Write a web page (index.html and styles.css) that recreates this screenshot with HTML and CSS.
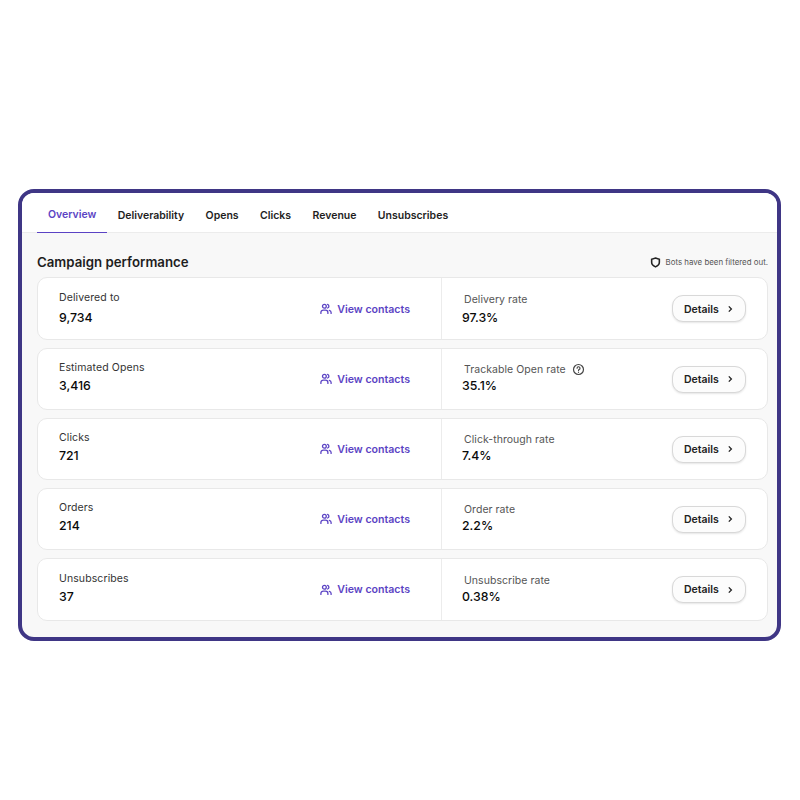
FILE: index.html
```html
<!DOCTYPE html>
<html lang="en">
<head>
<meta charset="utf-8">
<title>Campaign performance</title>
<link rel="stylesheet" href="styles.css">
</head>
<body>
<svg class="sprite" width="0" height="0" aria-hidden="true">
  <symbol id="people" viewBox="0 0 12 12">
    <circle cx="4.4" cy="3.2" r="1.9"/>
    <path d="M0.9 10.4V9.5a2.4 2.4 0 0 1 2.4-2.4h2.2a2.4 2.4 0 0 1 2.4 2.4v.9"/>
    <path d="M7.6 1.4a1.9 1.9 0 0 1 0 3.6"/>
    <path d="M9.3 7.3a2.3 2.3 0 0 1 1.8 2.2v.9"/>
  </symbol>
  <symbol id="chevron" viewBox="0 0 8 8">
    <path d="M2.800 1.400 5.400 4 2.800 6.600"/>
  </symbol>
</svg>
<main class="frame">
  <nav class="tabs">
    <a class="tab active">Overview</a>
    <a class="tab">Deliverability</a>
    <a class="tab">Opens</a>
    <a class="tab">Clicks</a>
    <a class="tab">Revenue</a>
    <a class="tab">Unsubscribes</a>
  </nav>
  <section class="content">
    <header class="head">
      <h1>Campaign performance</h1>
      <p class="note">
        <svg class="shield" viewBox="0 0 12 12"><path d="M6 1.200 10.200 2.600v3.200c0 2.400-1.800 4-4.200 5-2.400-1-4.200-2.600-4.200-5V2.600z"/></svg>
        Bots have been filtered out.
      </p>
    </header>
    <div class="rows">
      <article class="row first">
        <div class="cell left">
          <div class="stat"><span class="label">Delivered to</span><span class="value">9,734</span></div>
          <a class="link"><svg class="icon"><use href="#people"/></svg>View contacts</a>
        </div>
        <div class="cell right">
          <div class="stat rate"><span class="label muted">Delivery rate</span><span class="value">97.3%</span></div>
          <button class="btn">Details<svg class="chev"><use href="#chevron"/></svg></button>
        </div>
      </article>
      <article class="row">
        <div class="cell left">
          <div class="stat"><span class="label">Estimated Opens</span><span class="value">3,416</span></div>
          <a class="link"><svg class="icon"><use href="#people"/></svg>View contacts</a>
        </div>
        <div class="cell right">
          <div class="stat rate"><span class="label muted">Trackable Open rate
            <svg class="help" viewBox="0 0 12 12"><circle cx="6" cy="6" r="4.600"/><path d="M4.700 4.800a1.350 1.350 0 1 1 1.900 1.250c-.4.200-.6.450-.6.850"/><path d="M6 8.500v.1"/></svg></span><span class="value">35.1%</span></div>
          <button class="btn">Details<svg class="chev"><use href="#chevron"/></svg></button>
        </div>
      </article>
      <article class="row">
        <div class="cell left">
          <div class="stat"><span class="label">Clicks</span><span class="value">721</span></div>
          <a class="link"><svg class="icon"><use href="#people"/></svg>View contacts</a>
        </div>
        <div class="cell right">
          <div class="stat rate"><span class="label muted">Click-through rate</span><span class="value">7.4%</span></div>
          <button class="btn">Details<svg class="chev"><use href="#chevron"/></svg></button>
        </div>
      </article>
      <article class="row">
        <div class="cell left">
          <div class="stat"><span class="label">Orders</span><span class="value">214</span></div>
          <a class="link"><svg class="icon"><use href="#people"/></svg>View contacts</a>
        </div>
        <div class="cell right">
          <div class="stat rate"><span class="label muted">Order rate</span><span class="value">2.2%</span></div>
          <button class="btn">Details<svg class="chev"><use href="#chevron"/></svg></button>
        </div>
      </article>
      <article class="row last">
        <div class="cell left">
          <div class="stat"><span class="label">Unsubscribes</span><span class="value">37</span></div>
          <a class="link"><svg class="icon"><use href="#people"/></svg>View contacts</a>
        </div>
        <div class="cell right">
          <div class="stat rate"><span class="label muted">Unsubscribe rate</span><span class="value">0.38%</span></div>
          <button class="btn">Details<svg class="chev"><use href="#chevron"/></svg></button>
        </div>
      </article>
    </div>
  </section>
</main>
</body>
</html>
```
FILE: styles.css
```css
* { box-sizing: border-box; }
html, body { margin: 0; height: 800px; background: #fff; }
body {
  padding: 189px 19px 0 18px;
  font-family: Inter, "Liberation Sans", sans-serif;
  color: #1e1e1e;
}
.sprite { position: absolute; }
.frame {
  height: 452px;
  border: 4px solid #3f3685;
  border-radius: 16px;
  overflow: hidden;
  background: #f8f8f8;
}
.tabs {
  display: flex;
  height: 40px;
  padding-left: 15.300px;
  background: #fff;
  border-bottom: 1px solid #ececec;
}
.tab {
  display: flex;
  align-items: center;
  height: 40px;
  padding: 4px 10.700px 0;
  font-size: 10.500px;
  font-weight: 600;
  white-space: nowrap;
}
.tab.active {
  color: #5b43c4;
  border-bottom: 1px solid #5b43c4;
}
.content { padding: 0 9px 0 15px; }
.head {
  display: flex;
  align-items: center;
  justify-content: space-between;
  height: 44px;
  padding-top: 14px;
}
h1 { margin: 0; font-size: 13.250px; font-weight: 600; }
.note {
  display: flex;
  align-items: center;
  gap: 5px;
  margin: 0;
  font-size: 7.900px;
  color: #555;
}
.shield { width: 11px; height: 11px; fill: none; stroke: #222; stroke-width: 1.700; }
.rows { display: flex; flex-direction: column; gap: 8px; }
.row {
  display: flex;
  height: 62px;
  background: #fff;
  border: 1px solid #e8e8e8;
  border-radius: 10px;
}
.row.first, .row.last { height: 63px; }
.cell { display: flex; align-items: center; justify-content: space-between; }
.left { width: 404px; padding: 0 31px 0 21px; border-right: 1px solid #ececec; }
.right { flex: 1; padding: 0 21px 0 20px; }
.stat { display: flex; flex-direction: column; gap: 3px; padding-bottom: 2.500px; }
.first .stat { gap: 5px; padding-bottom: 0; padding-top: 1px; }
.rate { gap: .5px; padding-bottom: 0; }
.first .rate { gap: 3.500px; padding-top: 2.500px; }
.last .stat { padding-top: 1px; }
.last .rate { padding-top: 1px; }
.label {
  display: flex;
  align-items: center;
  gap: 6px;
  height: 13px;
  font-size: 10.500px;
  letter-spacing: 0.100px;
  color: #333;
}
.label.muted { margin-left: 2px; letter-spacing: 0.050px; color: #555; }
.value { font-size: 12.300px; line-height: 18px; font-weight: 450; color: #0a0a0a; }
.link {
  display: flex;
  align-items: center;
  gap: 5px;
  font-size: 10.600px;
  font-weight: 600;
  color: #5b43c4;
}
.first .link { padding-top: 1px; }
.icon { width: 12px; height: 12px; fill: none; stroke: #5b43c4; stroke-width: 1.300; stroke-linecap: round; }
.help { width: 13px; height: 13px; fill: none; stroke: #444; stroke-width: 1.100; stroke-linecap: round; }
.btn {
  display: flex;
  align-items: center;
  justify-content: space-between;
  width: 74px;
  height: 27px;
  padding: 0 11px;
  background: #fcfcfc;
  border: 1px solid #d8d8d8;
  border-radius: 11px;
  box-shadow: 0 1px 2px rgba(0, 0, 0, .1);
  font: 600 10.500px Inter, "Liberation Sans", sans-serif;
  color: #222;
}
.first .btn { padding-top: 1px; }
.chev { width: 8px; height: 8px; fill: none; stroke: #222; stroke-width: 1.300; }
```
